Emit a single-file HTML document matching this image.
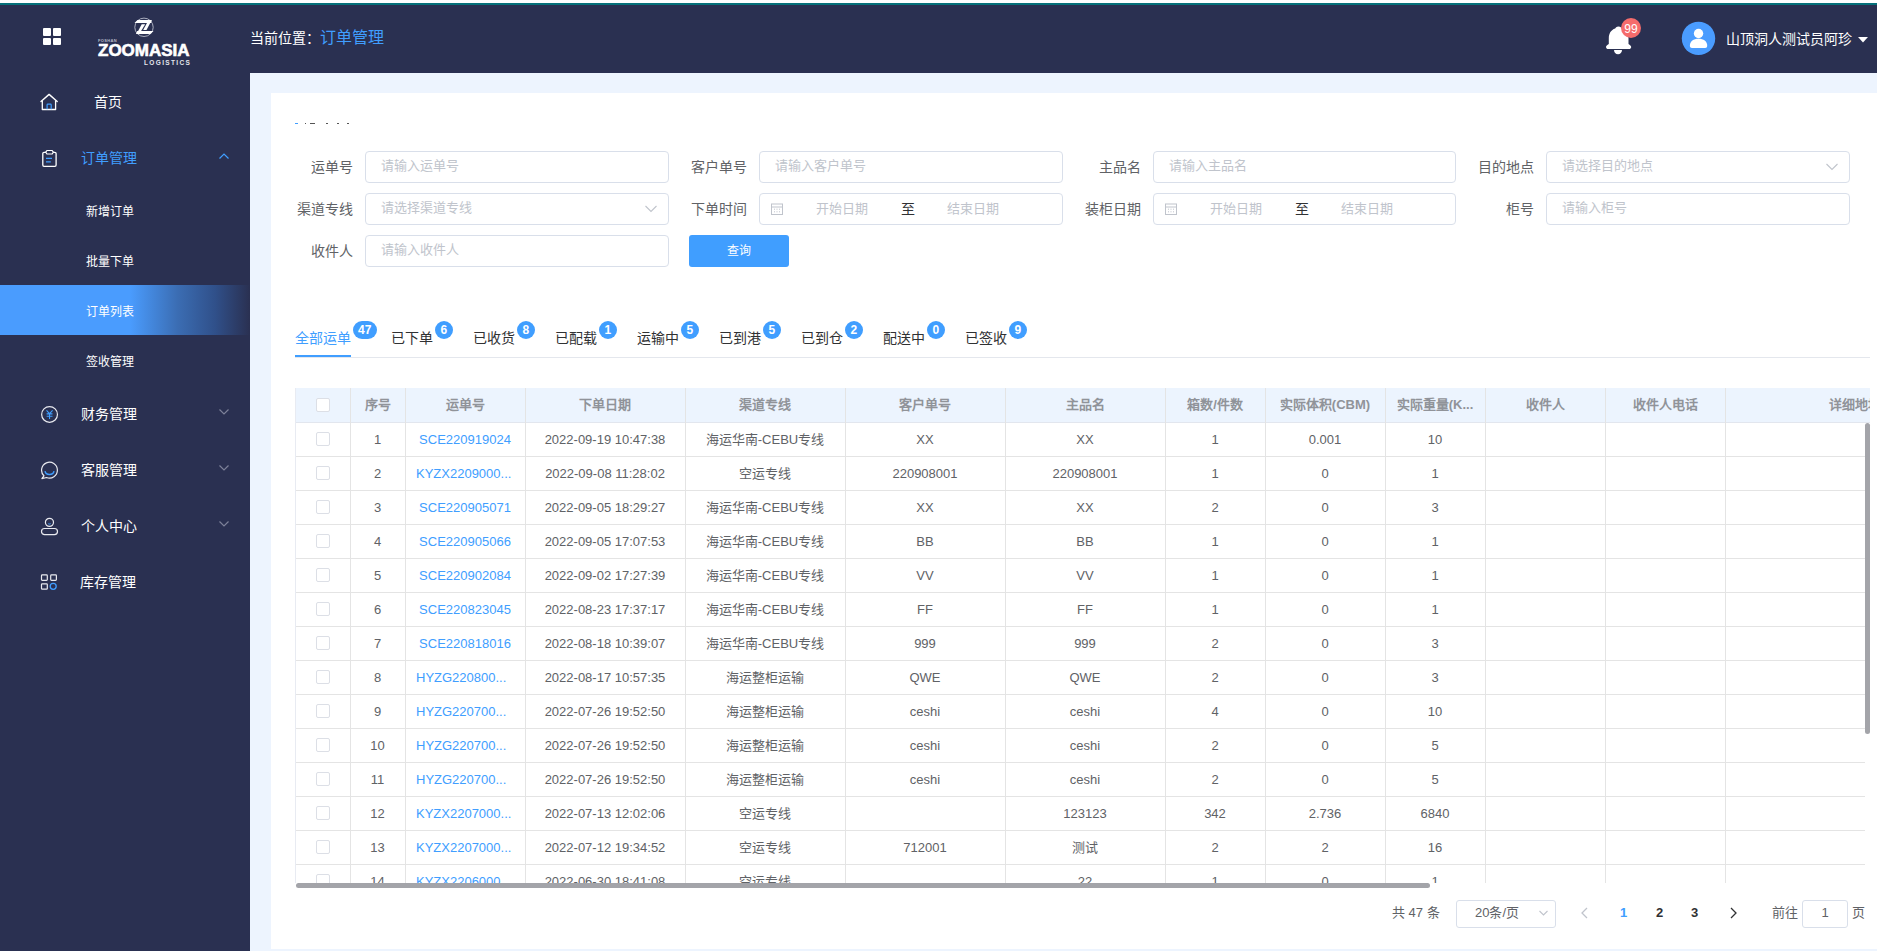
<!DOCTYPE html><html lang="zh-CN"><head><meta charset="utf-8"><title>订单列表</title><style>
*{box-sizing:border-box;margin:0;padding:0}
html,body{width:1877px;height:951px;overflow:hidden;background:#edf4fe;font-family:"Liberation Sans",sans-serif;}
.a{position:absolute;white-space:nowrap}
.t{position:absolute;white-space:nowrap;line-height:20px}
#top{position:absolute;left:0;top:0;width:1877px;height:3px;background:#fff}
#teal{position:absolute;left:0;top:3px;width:1877px;height:2px;background:#05707a}
#hdr{position:absolute;left:0;top:5px;width:1877px;height:68px;background:#2a3051}
#side{position:absolute;left:0;top:73px;width:250px;height:878px;background:#2a3051}
#card{position:absolute;left:271px;top:93px;width:1606px;height:856px;background:#fff}
.lbl{position:absolute;font-size:14px;color:#606266;line-height:20px;text-align:right;width:100px}
.inp{position:absolute;height:32px;width:304px;border:1px solid #d9dfea;border-radius:4px;background:#fff}
.ph{position:absolute;font-size:13px;color:#c0c4cc;line-height:20px;white-space:nowrap}
.menu{position:absolute;font-size:14px;color:#fff;line-height:20px;white-space:nowrap}
.sub{position:absolute;font-size:12px;color:#fff;line-height:20px;white-space:nowrap}
.tab{position:absolute;font-size:14px;color:#303133;line-height:20px;white-space:nowrap}
.bdg{position:absolute;height:18px;border-radius:9px;background:#409eff;color:#fff;font-size:12px;font-weight:bold;line-height:18px;text-align:center}
.cell{position:absolute;font-size:13px;color:#606266;line-height:20px;white-space:nowrap;text-align:center;overflow:hidden}
.hcell{position:absolute;font-size:13px;color:#909399;font-weight:bold;line-height:20px;white-space:nowrap;text-align:center;overflow:hidden}
.cb{position:absolute;width:14px;height:14px;border:1px solid #dcdfe6;border-radius:2px;background:#fff}
</style></head><body>
<div id="top"></div><div id="teal"></div><div id="hdr"></div><div id="side"></div><div id="card"></div>
<div class="a" style="left:43px;top:28px;width:8px;height:8px;background:#fff;border-radius:1px"></div>
<div class="a" style="left:53px;top:28px;width:8px;height:8px;background:#fff;border-radius:1px"></div>
<div class="a" style="left:43px;top:38px;width:8px;height:7px;background:#fff;border-radius:1px"></div>
<div class="a" style="left:53px;top:38px;width:8px;height:7px;background:#fff;border-radius:1px"></div>
<svg class="a" style="left:134px;top:17px" width="21" height="21" viewBox="0 0 21 21">
<circle cx="10" cy="10.3" r="9.2" fill="none" stroke="#b9bccb" stroke-width="0.9"/>
<path d="M0.5 6 L3.5 2.9 L17.8 2.9 L17 6 Z" fill="#fff"/>
<path d="M13 6 L17.5 3.5 L12.5 13 L9.2 13 Z" fill="#fff"/>
<path d="M7.7 7.3 L11.2 7.3 L6.8 14.5 L2.5 17 Z" fill="#fff"/>
<path d="M2 17 L3.2 13.9 L19.5 13.9 L16.5 17 Z" fill="#fff"/>
</svg>
<div class="a" style="left:98px;top:38px;font-size:4px;line-height:5px;color:#b8bac8;letter-spacing:0.35px;font-weight:bold">FOSHAN</div>
<div class="a" style="left:98px;top:41px;font-size:17px;line-height:20px;color:#fff;font-weight:bold;-webkit-text-stroke:0.6px #fff">ZOOMASIA</div>
<div class="a" style="left:144px;top:59px;font-size:6.5px;line-height:7px;color:#e4e5ec;font-weight:bold;letter-spacing:1.35px">LOGISTICS</div>
<div class="t" style="left:250px;top:28px;font-size:14px;color:#fff">当前位置：</div>
<div class="t" style="left:320px;top:27px;font-size:16px;line-height:22px;color:#409eff">订单管理</div>
<svg class="a" style="left:1604px;top:24px" width="30" height="32" viewBox="0 0 30 32">
<path d="M14.5 2.4 C16.5 2.4 17.5 3.5 17.8 4.6 C22 6 24.5 9.5 24.5 14.5 L24.5 20 C26 20.8 27.2 22 27.2 23 C27.2 24.3 26.2 25.1 25 25.1 L4.2 25.1 C3 25.1 2 24.3 2 23 C2 22 3.2 20.8 4.8 20 L4.8 14.5 C4.8 9.5 7 6 11.2 4.6 C11.5 3.5 12.5 2.4 14.5 2.4 Z" fill="#fff"/>
<path d="M10 26 L18 26 C18 28.5 16.3 30.3 14 30.3 C11.7 30.3 10 28.5 10 26 Z" fill="#fff"/>
</svg>
<div class="a" style="left:1621px;top:18px;width:20px;height:20px;border-radius:10px;background:#f56c6c;color:#fff;font-size:12px;line-height:22px;text-align:center">99</div>
<svg class="a" style="left:1681px;top:21px" width="35" height="35" viewBox="0 0 35 35">
<circle cx="17.5" cy="17.4" r="16.7" fill="#4a9cff"/>
<circle cx="17.55" cy="12.55" r="4.7" fill="#fff"/>
<path d="M8.9 24.5 C8.9 20.5 12.5 17.8 17.55 17.8 C22.6 17.8 26.2 20.5 26.2 24.5 L26.2 25 C26.2 26.1 25.3 27 24.2 27 L10.9 27 C9.8 27 8.9 26.1 8.9 25 Z" fill="#fff"/>
</svg>
<div class="t" style="left:1726px;top:29px;font-size:14px;color:#fff">山顶洞人测试员阿珍</div>
<svg class="a" style="left:1858px;top:37px" width="10" height="6" viewBox="0 0 10 6"><path d="M0 0 L10 0 L5 5.5 Z" fill="#fff"/></svg>
<svg class="a" style="left:40px;top:92px" width="19" height="19" viewBox="0 0 19 19">
<path d="M1 9.5 L9.1 2.4 L17.2 9.5" fill="none" stroke="#fff" stroke-width="1.4" stroke-linecap="round" stroke-linejoin="round"/>
<path d="M2.3 8.6 L2.3 17.5 L15.6 17.5 L15.6 8.6" fill="none" stroke="#fff" stroke-width="1.3" stroke-linejoin="round"/>
<path d="M7.1 17.2 L7.1 12.9 Q7.1 12.2 7.8 12.2 L10.5 12.2 Q11.2 12.2 11.2 12.9 L11.2 17.2" fill="none" stroke="#409eff" stroke-width="1.2"/>
</svg>
<div class="menu" style="left:94px;top:92px">首页</div>
<svg class="a" style="left:40px;top:149px" width="19" height="19" viewBox="0 0 19 19">
<rect x="2.8" y="3.3" width="13.3" height="14" rx="1.2" fill="none" stroke="#fff" stroke-width="1.3"/>
<path d="M6.9 1.5 L12.2 1.5 L13.3 3.2 L12.2 5 L6.9 5 L5.8 3.2 Z" fill="#2a3051" stroke="#fff" stroke-width="1.2" stroke-linejoin="round"/>
<path d="M6 9.4 L12 9.4 M6 12.8 L10.8 12.8" stroke="#409eff" stroke-width="1.3"/>
</svg>
<div class="menu" style="left:81px;top:148px;color:#409eff">订单管理</div>
<svg class="a" style="left:218px;top:152px" width="12" height="8" viewBox="0 0 12 8"><path d="M1.5 6.5 L6 2 L10.5 6.5" fill="none" stroke="#409eff" stroke-width="1.2"/></svg>
<div class="a" style="left:0;top:285px;width:250px;height:50px;background:linear-gradient(90deg,#4a9cfe 0%,#4a9cfe 52%,#3b6db3 71%,#30508a 86%,#2a3051 100%)"></div>
<div class="sub" style="left:86px;top:202px">新增订单</div>
<div class="sub" style="left:86px;top:252px">批量下单</div>
<div class="sub" style="left:86px;top:302px">订单列表</div>
<div class="sub" style="left:86px;top:352px">签收管理</div>
<div class="menu" style="left:81px;top:404px">财务管理</div>
<svg class="a" style="left:218px;top:408px" width="12" height="8" viewBox="0 0 12 8"><path d="M1.5 1.5 L6 6 L10.5 1.5" fill="none" stroke="#7d8199" stroke-width="1.2"/></svg>
<div class="menu" style="left:81px;top:460px">客服管理</div>
<svg class="a" style="left:218px;top:464px" width="12" height="8" viewBox="0 0 12 8"><path d="M1.5 1.5 L6 6 L10.5 1.5" fill="none" stroke="#7d8199" stroke-width="1.2"/></svg>
<div class="menu" style="left:81px;top:516px">个人中心</div>
<svg class="a" style="left:218px;top:520px" width="12" height="8" viewBox="0 0 12 8"><path d="M1.5 1.5 L6 6 L10.5 1.5" fill="none" stroke="#7d8199" stroke-width="1.2"/></svg>
<div class="menu" style="left:80px;top:572px">库存管理</div>
<svg class="a" style="left:40px;top:405px" width="20" height="20" viewBox="0 0 20 20">
<circle cx="9.55" cy="9.45" r="7.9" fill="none" stroke="#e8e9ef" stroke-width="1.2"/>
<path d="M6.5 5.4 L9.55 8.7 L12.6 5.4 M9.55 8.7 L9.55 14 M6.6 8.9 L12.5 8.9 M6.6 11.3 L12.5 11.3" fill="none" stroke="#409eff" stroke-width="1.1"/>
</svg>
<svg class="a" style="left:40px;top:461px" width="20" height="20" viewBox="0 0 20 20">
<path d="M3.91 14.79 A7.9 7.9 0 1 1 6.54 16.52 L1.9 17.6 Z" fill="none" stroke="#e8e9ef" stroke-width="1.2" stroke-linejoin="round"/>
<path d="M5 10.2 C5.8 14.6 13.2 14.6 14 10.2" fill="none" stroke="#409eff" stroke-width="1.4"/>
</svg>
<svg class="a" style="left:40px;top:517px" width="20" height="20" viewBox="0 0 20 20">
<circle cx="9.45" cy="5.35" r="4.05" fill="none" stroke="#e8e9ef" stroke-width="1.2"/>
<path d="M8.2 6.6 C8.9 7.2 10 7.2 10.7 6.6" stroke="#409eff" stroke-width="1" fill="none"/>
<rect x="1.5" y="11.5" width="16" height="6.1" rx="3" fill="none" stroke="#e8e9ef" stroke-width="1.2"/>
</svg>
<svg class="a" style="left:40px;top:573px" width="20" height="20" viewBox="0 0 20 20">
<rect x="1.5" y="1.9" width="5.8" height="5.5" rx="0.8" fill="none" stroke="#e8e9ef" stroke-width="1.2"/>
<rect x="10.7" y="1.9" width="5.7" height="5.5" rx="0.8" fill="none" stroke="#e8e9ef" stroke-width="1.2"/>
<rect x="1.5" y="10.8" width="5.8" height="5.4" rx="0.8" fill="none" stroke="#e8e9ef" stroke-width="1.2"/>
<circle cx="13.2" cy="13.3" r="3" fill="none" stroke="#409eff" stroke-width="1.3"/>
</svg>
<div class="a" style="left:295px;top:123px;width:3px;height:1px;background:#409eff"></div>
<div class="a" style="left:305px;top:123px;width:1px;height:1px;background:#555"></div>
<div class="a" style="left:310px;top:123px;width:5px;height:1px;background:#555"></div>
<div class="a" style="left:326px;top:123px;width:2px;height:1px;background:#555"></div>
<div class="a" style="left:337px;top:123px;width:2px;height:1px;background:#555"></div>
<div class="a" style="left:347px;top:123px;width:2px;height:1px;background:#555"></div>
<div class="lbl" style="left:253px;top:157px">运单号</div>
<div class="inp" style="left:365px;top:151px"></div>
<div class="ph" style="left:381px;top:156px">请输入运单号</div>
<div class="lbl" style="left:647px;top:157px">客户单号</div>
<div class="inp" style="left:759px;top:151px"></div>
<div class="ph" style="left:775px;top:156px">请输入客户单号</div>
<div class="lbl" style="left:1041px;top:157px">主品名</div>
<div class="inp" style="left:1153px;top:151px;width:303px"></div>
<div class="ph" style="left:1169px;top:156px">请输入主品名</div>
<div class="lbl" style="left:1434px;top:157px">目的地点</div>
<div class="inp" style="left:1546px;top:151px"></div>
<div class="ph" style="left:1562px;top:156px">请选择目的地点</div>
<svg class="a" style="left:1825px;top:163px" width="14" height="8" viewBox="0 0 14 8"><path d="M1.5 1 L7.0 6.5 L12.5 1" fill="none" stroke="#c0c4cc" stroke-width="1.1"/></svg>
<div class="lbl" style="left:253px;top:199px">渠道专线</div>
<div class="inp" style="left:365px;top:193px"></div>
<div class="ph" style="left:381px;top:198px">请选择渠道专线</div>
<svg class="a" style="left:644px;top:205px" width="14" height="8" viewBox="0 0 14 8"><path d="M1.5 1 L7.0 6.5 L12.5 1" fill="none" stroke="#c0c4cc" stroke-width="1.1"/></svg>
<div class="lbl" style="left:647px;top:199px">下单时间</div>
<div class="inp" style="left:759px;top:193px"></div>
<svg class="a" style="left:770px;top:202px" width="14" height="14" viewBox="0 0 14 14">
<rect x="1.5" y="2" width="11" height="10.5" fill="none" stroke="#c0c4cc" stroke-width="1"/>
<path d="M1.5 5 L12.5 5 M4 7.2 L5 7.2 M6.5 7.2 L7.5 7.2 M9 7.2 L10 7.2 M4 9.8 L5 9.8 M6.5 9.8 L7.5 9.8 M9 9.8 L10 9.8" stroke="#c0c4cc" stroke-width="1"/>
</svg>
<div class="ph" style="left:816px;top:199px">开始日期</div>
<div class="ph" style="left:901px;top:199px;color:#303133;font-size:14px">至</div>
<div class="ph" style="left:947px;top:199px">结束日期</div>
<div class="lbl" style="left:1041px;top:199px">装柜日期</div>
<div class="inp" style="left:1153px;top:193px;width:303px"></div>
<svg class="a" style="left:1164px;top:202px" width="14" height="14" viewBox="0 0 14 14">
<rect x="1.5" y="2" width="11" height="10.5" fill="none" stroke="#c0c4cc" stroke-width="1"/>
<path d="M1.5 5 L12.5 5 M4 7.2 L5 7.2 M6.5 7.2 L7.5 7.2 M9 7.2 L10 7.2 M4 9.8 L5 9.8 M6.5 9.8 L7.5 9.8 M9 9.8 L10 9.8" stroke="#c0c4cc" stroke-width="1"/>
</svg>
<div class="ph" style="left:1210px;top:199px">开始日期</div>
<div class="ph" style="left:1295px;top:199px;color:#303133;font-size:14px">至</div>
<div class="ph" style="left:1341px;top:199px">结束日期</div>
<div class="lbl" style="left:1434px;top:199px">柜号</div>
<div class="inp" style="left:1546px;top:193px"></div>
<div class="ph" style="left:1562px;top:198px">请输入柜号</div>
<div class="lbl" style="left:253px;top:241px">收件人</div>
<div class="inp" style="left:365px;top:235px"></div>
<div class="ph" style="left:381px;top:240px">请输入收件人</div>
<div class="a" style="left:689px;top:235px;width:100px;height:32px;background:#409eff;border-radius:3px;color:#fff;font-size:12px;line-height:32px;text-align:center">查询</div>
<div class="a" style="left:295px;top:357px;width:1575px;height:1px;background:#e4e7ed"></div>
<div class="a" style="left:295px;top:355px;width:56px;height:2px;background:#409eff"></div>
<div class="tab" style="left:295px;top:328px;color:#409eff">全部运单</div>
<div class="bdg" style="left:352.5px;top:321px;width:24.6px">47</div>
<div class="tab" style="left:391px;top:328px;color:#303133">已下单</div>
<div class="bdg" style="left:434.5px;top:321px;width:18.7px">6</div>
<div class="tab" style="left:473px;top:328px;color:#303133">已收货</div>
<div class="bdg" style="left:516.5px;top:321px;width:18.7px">8</div>
<div class="tab" style="left:555px;top:328px;color:#303133">已配载</div>
<div class="bdg" style="left:598.5px;top:321px;width:18.7px">1</div>
<div class="tab" style="left:637px;top:328px;color:#303133">运输中</div>
<div class="bdg" style="left:680.5px;top:321px;width:18.7px">5</div>
<div class="tab" style="left:719px;top:328px;color:#303133">已到港</div>
<div class="bdg" style="left:762.5px;top:321px;width:18.7px">5</div>
<div class="tab" style="left:801px;top:328px;color:#303133">已到仓</div>
<div class="bdg" style="left:844.5px;top:321px;width:18.7px">2</div>
<div class="tab" style="left:883px;top:328px;color:#303133">配送中</div>
<div class="bdg" style="left:926.5px;top:321px;width:18.7px">0</div>
<div class="tab" style="left:965px;top:328px;color:#303133">已签收</div>
<div class="bdg" style="left:1008.5px;top:321px;width:18.7px">9</div>
<div class="a" style="left:295px;top:388px;width:1575px;height:495px;overflow:hidden">
<div class="a" style="left:0;top:0;width:1575px;height:34px;background:#ecf4fe"></div>
<div class="a" style="left:0;top:34px;width:1575px;height:1px;background:#e2e6ee"></div>
<div class="a" style="left:0;top:68px;width:1570px;height:1px;background:#e4e4e4"></div>
<div class="a" style="left:0;top:102px;width:1570px;height:1px;background:#e4e4e4"></div>
<div class="a" style="left:0;top:136px;width:1570px;height:1px;background:#e4e4e4"></div>
<div class="a" style="left:0;top:170px;width:1570px;height:1px;background:#e4e4e4"></div>
<div class="a" style="left:0;top:204px;width:1570px;height:1px;background:#e4e4e4"></div>
<div class="a" style="left:0;top:238px;width:1570px;height:1px;background:#e4e4e4"></div>
<div class="a" style="left:0;top:272px;width:1570px;height:1px;background:#e4e4e4"></div>
<div class="a" style="left:0;top:306px;width:1570px;height:1px;background:#e4e4e4"></div>
<div class="a" style="left:0;top:340px;width:1570px;height:1px;background:#e4e4e4"></div>
<div class="a" style="left:0;top:374px;width:1570px;height:1px;background:#e4e4e4"></div>
<div class="a" style="left:0;top:408px;width:1570px;height:1px;background:#e4e4e4"></div>
<div class="a" style="left:0;top:442px;width:1570px;height:1px;background:#e4e4e4"></div>
<div class="a" style="left:0;top:476px;width:1570px;height:1px;background:#e4e4e4"></div>
<div class="a" style="left:0;top:510px;width:1570px;height:1px;background:#e4e4e4"></div>
<div class="a" style="left:55px;top:0;width:1px;height:495px;background:#e4e4e4"></div>
<div class="a" style="left:110px;top:0;width:1px;height:495px;background:#e4e4e4"></div>
<div class="a" style="left:230px;top:0;width:1px;height:495px;background:#e4e4e4"></div>
<div class="a" style="left:390px;top:0;width:1px;height:495px;background:#e4e4e4"></div>
<div class="a" style="left:550px;top:0;width:1px;height:495px;background:#e4e4e4"></div>
<div class="a" style="left:710px;top:0;width:1px;height:495px;background:#e4e4e4"></div>
<div class="a" style="left:870px;top:0;width:1px;height:495px;background:#e4e4e4"></div>
<div class="a" style="left:970px;top:0;width:1px;height:495px;background:#e4e4e4"></div>
<div class="a" style="left:1090px;top:0;width:1px;height:495px;background:#e4e4e4"></div>
<div class="a" style="left:1190px;top:0;width:1px;height:495px;background:#e4e4e4"></div>
<div class="a" style="left:1310px;top:0;width:1px;height:495px;background:#e4e4e4"></div>
<div class="a" style="left:1430px;top:0;width:1px;height:495px;background:#e4e4e4"></div>
<div class="a" style="left:0;top:0;width:1px;height:495px;background:#e8ebf2"></div>
<div class="cb" style="left:21px;top:10px"></div>
<div class="hcell" style="left:55px;top:7px;width:55px">序号</div>
<div class="hcell" style="left:110px;top:7px;width:120px">运单号</div>
<div class="hcell" style="left:230px;top:7px;width:160px">下单日期</div>
<div class="hcell" style="left:390px;top:7px;width:160px">渠道专线</div>
<div class="hcell" style="left:550px;top:7px;width:160px">客户单号</div>
<div class="hcell" style="left:710px;top:7px;width:160px">主品名</div>
<div class="hcell" style="left:870px;top:7px;width:100px">箱数/件数</div>
<div class="hcell" style="left:970px;top:7px;width:120px">实际体积(CBM)</div>
<div class="hcell" style="left:1090px;top:7px;width:100px">实际重量(K...</div>
<div class="hcell" style="left:1190px;top:7px;width:120px">收件人</div>
<div class="hcell" style="left:1310px;top:7px;width:120px">收件人电话</div>
<div class="hcell" style="left:1430px;top:7px;width:260px">详细地址</div>
<div class="cb" style="left:21px;top:44px"></div>
<div class="cell" style="left:55px;top:41.5px;width:55px">1</div>
<div class="cell" style="left:110px;top:41.5px;width:120px;color:#409eff">SCE220919024</div>
<div class="cell" style="left:230px;top:41.5px;width:160px">2022-09-19 10:47:38</div>
<div class="cell" style="left:390px;top:41.5px;width:160px">海运华南-CEBU专线</div>
<div class="cell" style="left:550px;top:41.5px;width:160px">XX</div>
<div class="cell" style="left:710px;top:41.5px;width:160px">XX</div>
<div class="cell" style="left:870px;top:41.5px;width:100px">1</div>
<div class="cell" style="left:970px;top:41.5px;width:120px">0.001</div>
<div class="cell" style="left:1090px;top:41.5px;width:100px">10</div>
<div class="cb" style="left:21px;top:78px"></div>
<div class="cell" style="left:55px;top:75.5px;width:55px">2</div>
<div class="cell" style="left:121px;top:75.5px;text-align:left;color:#409eff">KYZX2209000...</div>
<div class="cell" style="left:230px;top:75.5px;width:160px">2022-09-08 11:28:02</div>
<div class="cell" style="left:390px;top:75.5px;width:160px">空运专线</div>
<div class="cell" style="left:550px;top:75.5px;width:160px">220908001</div>
<div class="cell" style="left:710px;top:75.5px;width:160px">220908001</div>
<div class="cell" style="left:870px;top:75.5px;width:100px">1</div>
<div class="cell" style="left:970px;top:75.5px;width:120px">0</div>
<div class="cell" style="left:1090px;top:75.5px;width:100px">1</div>
<div class="cb" style="left:21px;top:112px"></div>
<div class="cell" style="left:55px;top:109.5px;width:55px">3</div>
<div class="cell" style="left:110px;top:109.5px;width:120px;color:#409eff">SCE220905071</div>
<div class="cell" style="left:230px;top:109.5px;width:160px">2022-09-05 18:29:27</div>
<div class="cell" style="left:390px;top:109.5px;width:160px">海运华南-CEBU专线</div>
<div class="cell" style="left:550px;top:109.5px;width:160px">XX</div>
<div class="cell" style="left:710px;top:109.5px;width:160px">XX</div>
<div class="cell" style="left:870px;top:109.5px;width:100px">2</div>
<div class="cell" style="left:970px;top:109.5px;width:120px">0</div>
<div class="cell" style="left:1090px;top:109.5px;width:100px">3</div>
<div class="cb" style="left:21px;top:146px"></div>
<div class="cell" style="left:55px;top:143.5px;width:55px">4</div>
<div class="cell" style="left:110px;top:143.5px;width:120px;color:#409eff">SCE220905066</div>
<div class="cell" style="left:230px;top:143.5px;width:160px">2022-09-05 17:07:53</div>
<div class="cell" style="left:390px;top:143.5px;width:160px">海运华南-CEBU专线</div>
<div class="cell" style="left:550px;top:143.5px;width:160px">BB</div>
<div class="cell" style="left:710px;top:143.5px;width:160px">BB</div>
<div class="cell" style="left:870px;top:143.5px;width:100px">1</div>
<div class="cell" style="left:970px;top:143.5px;width:120px">0</div>
<div class="cell" style="left:1090px;top:143.5px;width:100px">1</div>
<div class="cb" style="left:21px;top:180px"></div>
<div class="cell" style="left:55px;top:177.5px;width:55px">5</div>
<div class="cell" style="left:110px;top:177.5px;width:120px;color:#409eff">SCE220902084</div>
<div class="cell" style="left:230px;top:177.5px;width:160px">2022-09-02 17:27:39</div>
<div class="cell" style="left:390px;top:177.5px;width:160px">海运华南-CEBU专线</div>
<div class="cell" style="left:550px;top:177.5px;width:160px">VV</div>
<div class="cell" style="left:710px;top:177.5px;width:160px">VV</div>
<div class="cell" style="left:870px;top:177.5px;width:100px">1</div>
<div class="cell" style="left:970px;top:177.5px;width:120px">0</div>
<div class="cell" style="left:1090px;top:177.5px;width:100px">1</div>
<div class="cb" style="left:21px;top:214px"></div>
<div class="cell" style="left:55px;top:211.5px;width:55px">6</div>
<div class="cell" style="left:110px;top:211.5px;width:120px;color:#409eff">SCE220823045</div>
<div class="cell" style="left:230px;top:211.5px;width:160px">2022-08-23 17:37:17</div>
<div class="cell" style="left:390px;top:211.5px;width:160px">海运华南-CEBU专线</div>
<div class="cell" style="left:550px;top:211.5px;width:160px">FF</div>
<div class="cell" style="left:710px;top:211.5px;width:160px">FF</div>
<div class="cell" style="left:870px;top:211.5px;width:100px">1</div>
<div class="cell" style="left:970px;top:211.5px;width:120px">0</div>
<div class="cell" style="left:1090px;top:211.5px;width:100px">1</div>
<div class="cb" style="left:21px;top:248px"></div>
<div class="cell" style="left:55px;top:245.5px;width:55px">7</div>
<div class="cell" style="left:110px;top:245.5px;width:120px;color:#409eff">SCE220818016</div>
<div class="cell" style="left:230px;top:245.5px;width:160px">2022-08-18 10:39:07</div>
<div class="cell" style="left:390px;top:245.5px;width:160px">海运华南-CEBU专线</div>
<div class="cell" style="left:550px;top:245.5px;width:160px">999</div>
<div class="cell" style="left:710px;top:245.5px;width:160px">999</div>
<div class="cell" style="left:870px;top:245.5px;width:100px">2</div>
<div class="cell" style="left:970px;top:245.5px;width:120px">0</div>
<div class="cell" style="left:1090px;top:245.5px;width:100px">3</div>
<div class="cb" style="left:21px;top:282px"></div>
<div class="cell" style="left:55px;top:279.5px;width:55px">8</div>
<div class="cell" style="left:121px;top:279.5px;text-align:left;color:#409eff">HYZG220800...</div>
<div class="cell" style="left:230px;top:279.5px;width:160px">2022-08-17 10:57:35</div>
<div class="cell" style="left:390px;top:279.5px;width:160px">海运整柜运输</div>
<div class="cell" style="left:550px;top:279.5px;width:160px">QWE</div>
<div class="cell" style="left:710px;top:279.5px;width:160px">QWE</div>
<div class="cell" style="left:870px;top:279.5px;width:100px">2</div>
<div class="cell" style="left:970px;top:279.5px;width:120px">0</div>
<div class="cell" style="left:1090px;top:279.5px;width:100px">3</div>
<div class="cb" style="left:21px;top:316px"></div>
<div class="cell" style="left:55px;top:313.5px;width:55px">9</div>
<div class="cell" style="left:121px;top:313.5px;text-align:left;color:#409eff">HYZG220700...</div>
<div class="cell" style="left:230px;top:313.5px;width:160px">2022-07-26 19:52:50</div>
<div class="cell" style="left:390px;top:313.5px;width:160px">海运整柜运输</div>
<div class="cell" style="left:550px;top:313.5px;width:160px">ceshi</div>
<div class="cell" style="left:710px;top:313.5px;width:160px">ceshi</div>
<div class="cell" style="left:870px;top:313.5px;width:100px">4</div>
<div class="cell" style="left:970px;top:313.5px;width:120px">0</div>
<div class="cell" style="left:1090px;top:313.5px;width:100px">10</div>
<div class="cb" style="left:21px;top:350px"></div>
<div class="cell" style="left:55px;top:347.5px;width:55px">10</div>
<div class="cell" style="left:121px;top:347.5px;text-align:left;color:#409eff">HYZG220700...</div>
<div class="cell" style="left:230px;top:347.5px;width:160px">2022-07-26 19:52:50</div>
<div class="cell" style="left:390px;top:347.5px;width:160px">海运整柜运输</div>
<div class="cell" style="left:550px;top:347.5px;width:160px">ceshi</div>
<div class="cell" style="left:710px;top:347.5px;width:160px">ceshi</div>
<div class="cell" style="left:870px;top:347.5px;width:100px">2</div>
<div class="cell" style="left:970px;top:347.5px;width:120px">0</div>
<div class="cell" style="left:1090px;top:347.5px;width:100px">5</div>
<div class="cb" style="left:21px;top:384px"></div>
<div class="cell" style="left:55px;top:381.5px;width:55px">11</div>
<div class="cell" style="left:121px;top:381.5px;text-align:left;color:#409eff">HYZG220700...</div>
<div class="cell" style="left:230px;top:381.5px;width:160px">2022-07-26 19:52:50</div>
<div class="cell" style="left:390px;top:381.5px;width:160px">海运整柜运输</div>
<div class="cell" style="left:550px;top:381.5px;width:160px">ceshi</div>
<div class="cell" style="left:710px;top:381.5px;width:160px">ceshi</div>
<div class="cell" style="left:870px;top:381.5px;width:100px">2</div>
<div class="cell" style="left:970px;top:381.5px;width:120px">0</div>
<div class="cell" style="left:1090px;top:381.5px;width:100px">5</div>
<div class="cb" style="left:21px;top:418px"></div>
<div class="cell" style="left:55px;top:415.5px;width:55px">12</div>
<div class="cell" style="left:121px;top:415.5px;text-align:left;color:#409eff">KYZX2207000...</div>
<div class="cell" style="left:230px;top:415.5px;width:160px">2022-07-13 12:02:06</div>
<div class="cell" style="left:390px;top:415.5px;width:160px">空运专线</div>
<div class="cell" style="left:550px;top:415.5px;width:160px"></div>
<div class="cell" style="left:710px;top:415.5px;width:160px">123123</div>
<div class="cell" style="left:870px;top:415.5px;width:100px">342</div>
<div class="cell" style="left:970px;top:415.5px;width:120px">2.736</div>
<div class="cell" style="left:1090px;top:415.5px;width:100px">6840</div>
<div class="cb" style="left:21px;top:452px"></div>
<div class="cell" style="left:55px;top:449.5px;width:55px">13</div>
<div class="cell" style="left:121px;top:449.5px;text-align:left;color:#409eff">KYZX2207000...</div>
<div class="cell" style="left:230px;top:449.5px;width:160px">2022-07-12 19:34:52</div>
<div class="cell" style="left:390px;top:449.5px;width:160px">空运专线</div>
<div class="cell" style="left:550px;top:449.5px;width:160px">712001</div>
<div class="cell" style="left:710px;top:449.5px;width:160px">测试</div>
<div class="cell" style="left:870px;top:449.5px;width:100px">2</div>
<div class="cell" style="left:970px;top:449.5px;width:120px">2</div>
<div class="cell" style="left:1090px;top:449.5px;width:100px">16</div>
<div class="cb" style="left:21px;top:486px"></div>
<div class="cell" style="left:55px;top:483.5px;width:55px">14</div>
<div class="cell" style="left:121px;top:483.5px;text-align:left;color:#409eff">KYZX2206000...</div>
<div class="cell" style="left:230px;top:483.5px;width:160px">2022-06-30 18:41:08</div>
<div class="cell" style="left:390px;top:483.5px;width:160px">空运专线</div>
<div class="cell" style="left:550px;top:483.5px;width:160px"></div>
<div class="cell" style="left:710px;top:483.5px;width:160px">22</div>
<div class="cell" style="left:870px;top:483.5px;width:100px">1</div>
<div class="cell" style="left:970px;top:483.5px;width:120px">0</div>
<div class="cell" style="left:1090px;top:483.5px;width:100px">1</div>
</div>
<div class="a" style="left:1865px;top:423px;width:5px;height:311px;border-radius:3px;background:#a3a4a9"></div>
<div class="a" style="left:296px;top:883px;width:1134px;height:5px;border-radius:3px;background:#a3a4a9"></div>
<div class="t" style="left:1392px;top:903px;font-size:13px;color:#606266">共 47 条</div>
<div class="inp" style="left:1456px;top:900px;width:100px;height:28px;border-radius:3px"></div>
<div class="t" style="left:1475px;top:903px;font-size:13px;color:#606266">20条/页</div>
<svg class="a" style="left:1538px;top:910px" width="11" height="8" viewBox="0 0 11 8"><path d="M1.5 1 L5.5 5.0 L9.5 1" fill="none" stroke="#c0c4cc" stroke-width="1.1"/></svg>
<svg class="a" style="left:1580px;top:907px" width="9" height="12" viewBox="0 0 9 12"><path d="M7 1 L2 6 L7 11" fill="none" stroke="#c0c4cc" stroke-width="1.3"/></svg>
<div class="t" style="left:1606px;top:903px;width:35px;text-align:center;font-size:13px;font-weight:bold;color:#409eff">1</div>
<div class="t" style="left:1642px;top:903px;width:35px;text-align:center;font-size:13px;font-weight:bold;color:#303133">2</div>
<div class="t" style="left:1677px;top:903px;width:35px;text-align:center;font-size:13px;font-weight:bold;color:#303133">3</div>
<svg class="a" style="left:1729px;top:907px" width="9" height="12" viewBox="0 0 9 12"><path d="M2 1 L7 6 L2 11" fill="none" stroke="#303133" stroke-width="1.3"/></svg>
<div class="t" style="left:1772px;top:903px;font-size:13px;color:#606266">前往</div>
<div class="inp" style="left:1802px;top:900px;width:46px;height:28px;border-radius:3px"></div>
<div class="t" style="left:1802px;top:903px;width:46px;text-align:center;font-size:13px;color:#606266">1</div>
<div class="t" style="left:1852px;top:903px;font-size:13px;color:#606266">页</div>
</body></html>
